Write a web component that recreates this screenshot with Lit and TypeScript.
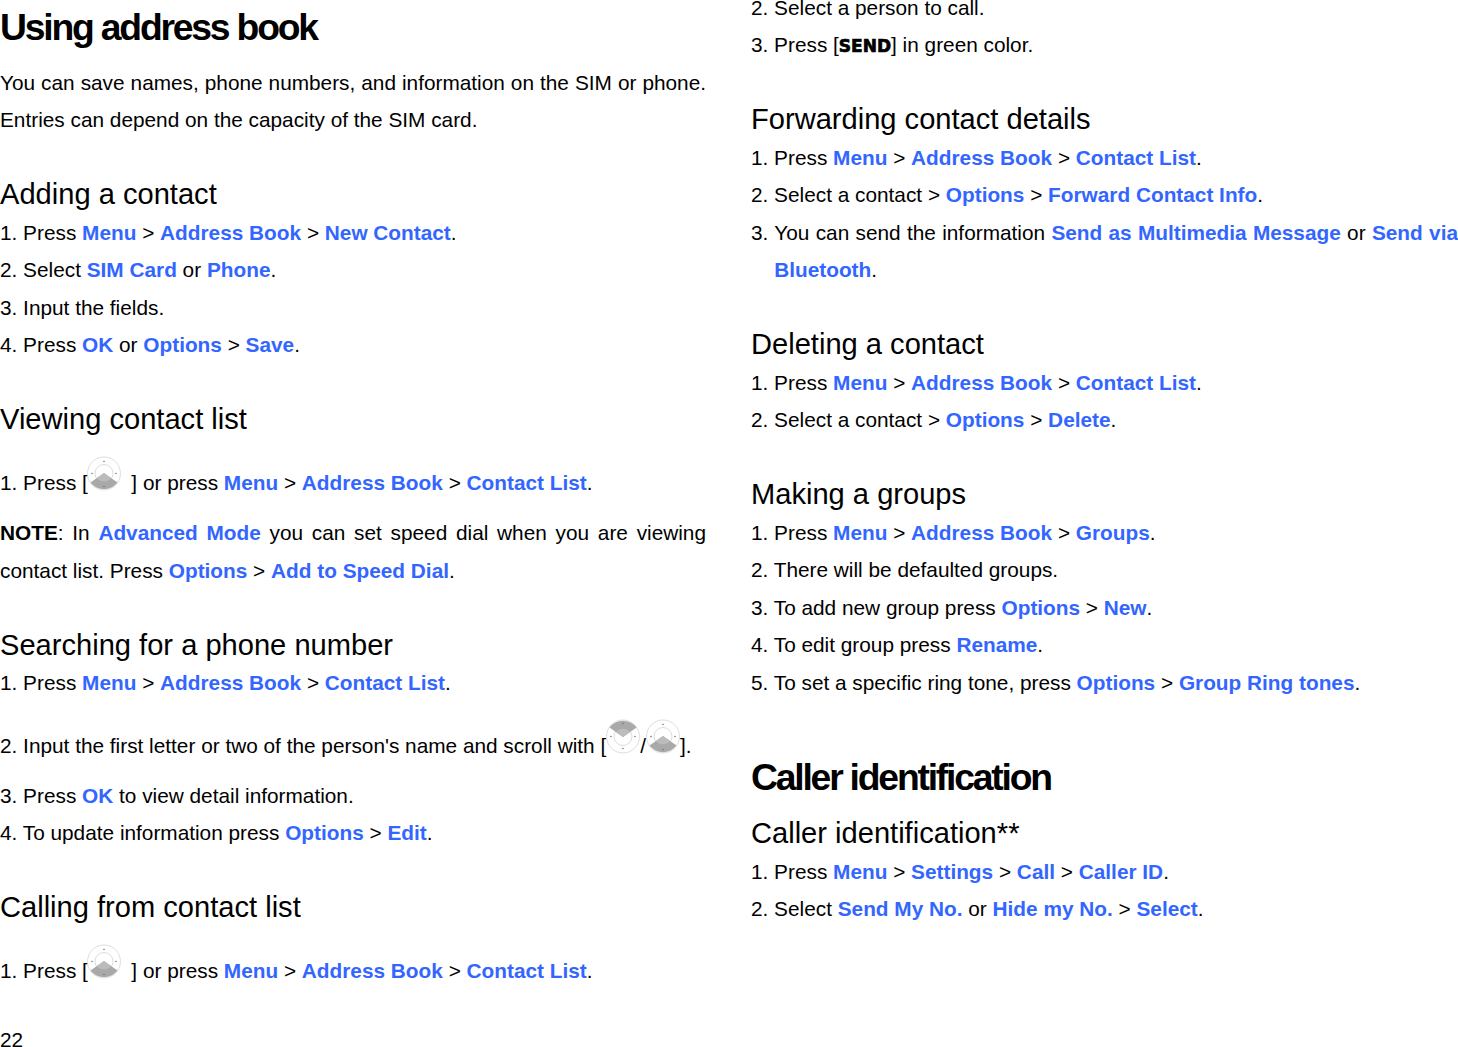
import { LitElement, html, css, svg } from "lit";
import { customElement } from "lit/decorators.js";

const b = (t: string) => html`<b>${t}</b>`;
const g = html`&gt;`;

const pad = (dir: "up" | "down", tight = false) => {
  const path = dir === "down"
    ? "M17 16.500 L3.500 26 A17 17 0 0 0 30.500 26 Z"
    : "M17 17.500 L3.500 8 A17 17 0 0 1 30.500 8 Z";
  const dots = dir === "down" ? [[17, 5], [5, 17], [29, 17], [17, 30]] : [[17, 4], [5, 17], [29, 17], [17, 29]];
  return html`<svg class="pad ${tight ? "tight" : ""}" width="34" height="35" viewBox="0 0 34 34">
    ${svg`<circle cx="17" cy="17" r="16.500" fill="#fff" stroke="#d4d4d4" stroke-width="0.800"/>
    <circle cx="17" cy="17" r="9" fill="none" stroke="#dcdcdc" stroke-width="1"/>
    <path d=${path} fill="#a9a9a9"/>
    <path d=${dir === "down" ? "M17 16.500 L10 21.500 A9 9 0 0 0 24 21.500 Z" : "M17 17.500 L10 12.500 A9 9 0 0 1 24 12.500 Z"} fill="#bcbcbc"/>
    ${dots.map(([x, y]) => svg`<circle cx=${x} cy=${y} r="0.800" fill="#777"/>`)}`}
  </svg>`;
};

@customElement("app-root")
export class AppRoot extends LitElement {
  static styles = css`
    :host {
      display: block;
      width: 1458px;
      height: 1047px;
      overflow: hidden;
      background: #fff;
      color: #000;
      font-family: "Liberation Sans", Arial, sans-serif;
      font-size: 20.800px;
      line-height: 37.500px;
    }
    .page { display: flex; gap: 45px; }
    .col { width: 706px; flex: none; }
    .col.right { width: 707px; margin-top: -12.250px; }
    .col.left { margin-top: 7.750px; }
    b { color: #3366ff; font-weight: 700; }
    .line { height: 37.500px; line-height: 39px; white-space: nowrap; }
    .h1 { height: 37.500px; line-height: 39.500px; font-size: 37.300px; font-weight: 700; letter-spacing: -2.200px; white-space: nowrap; }
    .h2 { height: 37.500px; line-height: 39px; font-size: 29.100px; white-space: nowrap; }
    .gap { height: 37.500px; }
    .gap-intro { height: 17.500px; }
    .gap-intro.r { height: 18.500px; }
    .gap-big { height: 57.750px; }
    .icon-row { padding-top: 25.500px; padding-bottom: 12.500px; }
    .icon-row.short { padding-bottom: 12px; }
    .wrap { padding-left: 23.200px; text-indent: -23.200px; padding-top: 0.750px; height: 74.250px; line-height: 37.500px; text-align: justify; }
    .just { text-align: justify; text-align-last: justify; white-space: normal; }
    .just strong { font-weight: 700; color: #000; }
    .pad { display: inline-block; vertical-align: 19px; margin: -20px 0 -20px 0; }
    .pad.tight { margin-left: -1px; }
    .after { margin-right: 10.500px; }
    .send {
      display: inline-block;
      font-family: "DejaVu Sans", sans-serif;
      font-weight: 700;
      font-size: 17px;
      -webkit-text-stroke: 0.700px #000;
      line-height: 1;
    }
    .pageno { margin-top: 18.500px; }
  `;

  render() {
    return html`<div class="page">
      <div class="col left">
        <div class="h1">Using address book</div>
        <div class="gap-intro"></div>
        <div class="line just">You can save names, phone numbers, and information on the SIM or phone.</div>
        <div class="line">Entries can depend on the capacity of the SIM card.</div>
        <div class="gap"></div>
        <div class="h2">Adding a contact</div>
        <div class="line">1. Press ${b("Menu")} ${g} ${b("Address Book")} ${g} ${b("New Contact")}.</div>
        <div class="line">2. Select ${b("SIM Card")} or ${b("Phone")}.</div>
        <div class="line">3. Input the fields.</div>
        <div class="line">4. Press ${b("OK")} or ${b("Options")} ${g} ${b("Save")}.</div>
        <div class="gap"></div>
        <div class="h2">Viewing contact list</div>
        <div class="line icon-row">1. Press [${pad("down", true)}<span class="after"></span>] or press ${b("Menu")} ${g} ${b("Address Book")} ${g} ${b("Contact List")}.</div>
        <div class="line just"><strong>NOTE</strong>: In ${b("Advanced Mode")} you can set speed dial when you are viewing</div>
        <div class="line">contact list. Press ${b("Options")} ${g} ${b("Add to Speed Dial")}.</div>
        <div class="gap"></div>
        <div class="h2">Searching for a phone number</div>
        <div class="line">1. Press ${b("Menu")} ${g} ${b("Address Book")} ${g} ${b("Contact List")}.</div>
        <div class="line icon-row short">2. Input the first letter or two of the person's name and scroll with [${pad("up")}/${pad("down")}].</div>
        <div class="line">3. Press ${b("OK")} to view detail information.</div>
        <div class="line">4. To update information press ${b("Options")} ${g} ${b("Edit")}.</div>
        <div class="gap"></div>
        <div class="h2">Calling from contact list</div>
        <div class="line icon-row">1. Press [${pad("down", true)}<span class="after"></span>] or press ${b("Menu")} ${g} ${b("Address Book")} ${g} ${b("Contact List")}.</div>
        <div class="line pageno">22</div>
      </div>
      <div class="col right">
        <div class="line">2. Select a person to call.</div>
        <div class="line">3. Press [<span class="send">SEND</span>] in green color.</div>
        <div class="gap"></div>
        <div class="h2">Forwarding contact details</div>
        <div class="line">1. Press ${b("Menu")} ${g} ${b("Address Book")} ${g} ${b("Contact List")}.</div>
        <div class="line">2. Select a contact ${g} ${b("Options")} ${g} ${b("Forward Contact Info")}.</div>
        <div class="wrap">3. You can send the information ${b("Send as Multimedia Message")} or ${b("Send via Bluetooth")}.</div>
        <div class="gap"></div>
        <div class="h2">Deleting a contact</div>
        <div class="line">1. Press ${b("Menu")} ${g} ${b("Address Book")} ${g} ${b("Contact List")}.</div>
        <div class="line">2. Select a contact ${g} ${b("Options")} ${g} ${b("Delete")}.</div>
        <div class="gap"></div>
        <div class="h2">Making a groups</div>
        <div class="line">1. Press ${b("Menu")} ${g} ${b("Address Book")} ${g} ${b("Groups")}.</div>
        <div class="line">2. There will be defaulted groups.</div>
        <div class="line">3. To add new group press ${b("Options")} ${g} ${b("New")}.</div>
        <div class="line">4. To edit group press ${b("Rename")}.</div>
        <div class="line">5. To set a specific ring tone, press ${b("Options")} ${g} ${b("Group Ring tones")}.</div>
        <div class="gap-big"></div>
        <div class="h1">Caller identification</div>
        <div class="gap-intro r"></div>
        <div class="h2">Caller identification**</div>
        <div class="line">1. Press ${b("Menu")} ${g} ${b("Settings")} ${g} ${b("Call")} ${g} ${b("Caller ID")}.</div>
        <div class="line">2. Select ${b("Send My No.")} or ${b("Hide my No.")} ${g} ${b("Select")}.</div>
      </div>
    </div>`;
  }
}
